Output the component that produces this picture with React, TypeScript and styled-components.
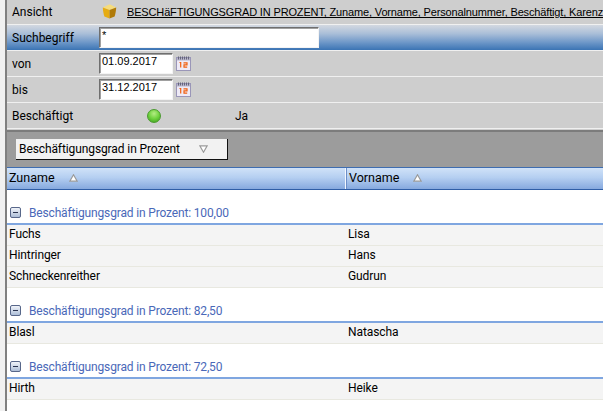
import React from "react";
import styled, { createGlobalStyle } from "styled-components";

const Global = createGlobalStyle`
  html, body { margin: 0; padding: 0; background: #fff; overflow: hidden; }
  body { font-family: Roboto, "Liberation Sans", sans-serif; font-size: 12px; color: #000; }
`;

const Shell = styled.div`
  width: 603px;
  height: 411px;
  display: flex;
  overflow: hidden;
`;

const Gutter = styled.div`
  width: 5px;
  flex: none;
  background: #f1f1f1;
  border-right: 2px solid #808080;
`;

const Main = styled.div`
  flex: 1;
  min-width: 0;
  display: flex;
  flex-direction: column;
`;

const FormRow = styled.div<{ $h: number }>`
  height: ${(p) => p.$h}px;
  box-sizing: border-box;
  flex: none;
  display: flex;
  align-items: center;
  background: #cecece;
  border-bottom: 1px solid #f0f0f0;
  white-space: nowrap;
  overflow: hidden;
`;

const SearchRow = styled(FormRow)`
  background: linear-gradient(#d3d8e0 0%, #a9bed8 35%, #6d97c8 70%, #3b74b4 100%);
`;

const Label = styled.div`
  width: 88px;
  padding-left: 5px;
  flex: none;
  font-size: 12px;
`;

const ViewIcon = styled.svg`
  width: 15px;
  height: 15px;
  flex: none;
  margin: 0 10px 2px 2px;
`;

const ViewLink = styled.span`
  font-family: "Liberation Sans", sans-serif;
  font-size: 11px;
  letter-spacing: -0.15px;
  text-decoration: underline;
`;

const TextField = styled.div<{ $w: number }>`
  width: ${(p) => p.$w}px;
  height: 21px;
  box-sizing: border-box;
  background: #fff;
  border-style: solid;
  border-width: 1px;
  border-color: #6f6f6f #f4f4f4 #f4f4f4 #6f6f6f;
  box-shadow: inset 1px 1px 0 #a0a0a0;
  font-family: "Liberation Sans", sans-serif;
  font-size: 11px;
  line-height: 15px;
  padding-left: 2px;
  margin-left: -1px;
`;

const CalIcon = styled.svg`
  width: 15px;
  height: 15px;
  flex: none;
  margin-left: 3px;
`;

const Led = styled.div`
  width: 14px;
  height: 14px;
  flex: none;
  border-radius: 50%;
  background: radial-gradient(circle at 50% 30%, #b4ec84 0%, #6fd23e 50%, #3a9a1c 100%);
  border: 0.5px solid #4a9a2e;
  box-sizing: border-box;
  margin-left: 47px;
`;

const Value = styled.span`
  margin-left: 74px;
  font-size: 12px;
`;

const GroupBar = styled.div`
  height: 37px;
  flex: none;
  margin-top: 1px;
  box-sizing: border-box;
  background: #9c9c9c;
  border-top: 2px solid #7c7c7c;
  box-shadow: 0 -1px 0 #cecece;
  padding: 7px 0 0 9px;
`;

const GroupChip = styled.div`
  width: 212px;
  height: 21px;
  box-sizing: border-box;
  background: #f2f2f2;
  border-right: 1px solid #111;
  border-bottom: 1px solid #111;
  display: flex;
  align-items: center;
  padding: 0 0 0 3px;
  font-size: 12px;
  letter-spacing: -0.1px;
`;

const SortGlyph = styled.svg`
  width: 9px;
  height: 8px;
  flex: none;
`;

const ChipSort = styled(SortGlyph)`
  margin-left: 19px;
`;

const GridHeader = styled.div`
  height: 23px;
  flex: none;
  box-sizing: border-box;
  display: flex;
  align-items: stretch;
  background: linear-gradient(#d0e2f8 0%, #b5cff1 45%, #86a9de 100%);
  border-top: 1px solid #3f6db0;
  border-bottom: 1px solid #2f5ea6;
`;

const HeadCell = styled.div<{ $w: number }>`
  width: ${(p) => p.$w}px;
  flex: none;
  box-sizing: border-box;
  display: flex;
  align-items: center;
  padding: 0 0 2px 2px;
  font-size: 12.5px;
  & + & { box-shadow: inset 1px 0 0 #f4f8ff, inset 2px 0 0 #6c8fc8; padding-left: 4px; }
`;

const HeadSort = styled(SortGlyph)`
  margin-left: 14px;
`;

const GroupHeader = styled.div`
  height: 35px;
  flex: none;
  box-sizing: border-box;
  display: flex;
  align-items: flex-end;
  padding: 0 0 3px 3px;
  background: #fff;
  border-bottom: 2px solid #7fa6e0;
  color: #4a68b8;
  font-size: 12px;
  letter-spacing: -0.16px;
`;

const Toggle = styled.svg`
  width: 11px;
  height: 11px;
  flex: none;
  margin: 0 8px 2px 0;
`;

const Row = styled.div`
  height: 21px;
  flex: none;
  box-sizing: border-box;
  display: flex;
  align-items: center;
  padding-bottom: 2px;
  background: #f4f4f4;
  border-bottom: 1px solid #e8e8e0;
  font-size: 12px;
  letter-spacing: -0.1px;
`;

const NameCell = styled.div`
  width: 341px;
  flex: none;
  padding-left: 2px;
  box-sizing: border-box;
`;

const Cube = () => (
  <ViewIcon viewBox="0 0 15 15">
    <path d="M.8 3.4 7 .6c.4-.1.8-.1 1.100 0l6.100 2.800L7.500 6Z" fill="#f6dc7c" />
    <path d="M.8 3.400 7.500 6v8.600L2.400 12.500C1.500 10 1 6.500.8 3.400Z" fill="#e6ac12" />
    <path d="M14.200 3.400 7.500 6v8.600l5.100-2.100c.9-2.500 1.400-6 1.600-9.100Z" fill="#b07a08" />
  </ViewIcon>
);

const Calendar = () => (
  <CalIcon viewBox="0 0 15 15">
    <rect x=".5" y="1.500" width="14" height="13" fill="#eeeaf6" stroke="#9a96b8" />
    <rect x="1" y="2" width="13" height="2.500" fill="#b8b6cc" />
    <path d="M2.500 .5v3M4.500 .5v3M6.500 .5v3M8.500 .5v3M10.500 .5v3M12.500 .5v3" stroke="#66667a" strokeWidth="1" />
    <path d="M3.500 6.500h1.200v5M7.500 6.800h3.500v2H8v2.400h3.200" fill="none" stroke="#f2600f" strokeWidth="1.200" />
  </CalIcon>
);

const Triangle = ({ down, as: C }: { down?: boolean; as: typeof ChipSort }) => (
  <C viewBox="0 0 9 8">
    <path
      d={down ? "M.8.8h7.400L4.500 7.200Z" : "M.8 7.200h7.400L4.500.8Z"}
      fill="#fff"
      stroke="#9a9a9a"
      strokeWidth="1.200"
    />
  </C>
);

const Minus = () => (
  <Toggle viewBox="0 0 11 11">
    <defs>
      <linearGradient id="tg" x1="0" y1="0" x2="0" y2="1">
        <stop offset="0" stopColor="#f4f6fa" />
        <stop offset="1" stopColor="#a9bbd6" />
      </linearGradient>
    </defs>
    <rect x=".5" y=".5" width="10" height="10" rx="1.500" fill="url(#tg)" stroke="#58678a" />
    <path d="M3 5.500h5" stroke="#2a3450" strokeWidth="1" />
  </Toggle>
);

const groups = [
  { title: "Beschäftigungsgrad in Prozent: 100,00", rows: [["Fuchs", "Lisa"], ["Hintringer", "Hans"], ["Schneckenreither", "Gudrun"]] },
  { title: "Beschäftigungsgrad in Prozent: 82,50", rows: [["Blasl", "Natascha"]] },
  { title: "Beschäftigungsgrad in Prozent: 72,50", rows: [["Hirth", "Heike"]] },
];

export default function App() {
  return (
    <Shell>
      <Global />
      <Gutter />
      <Main>
        <FormRow $h={25}>
          <Label>Ansicht</Label>
          <Cube />
          <ViewLink>BESCHäFTIGUNGSGRAD IN PROZENT, Zuname, Vorname, Personalnummer, Beschäftigt, Karenziert</ViewLink>
        </FormRow>
        <SearchRow $h={26}>
          <Label>Suchbegriff</Label>
          <TextField $w={220}>*</TextField>
        </SearchRow>
        <FormRow $h={26}>
          <Label>von</Label>
          <TextField $w={74}>01.09.2017</TextField>
          <Calendar />
        </FormRow>
        <FormRow $h={26}>
          <Label>bis</Label>
          <TextField $w={74}>31.12.2017</TextField>
          <Calendar />
        </FormRow>
        <FormRow $h={26}>
          <Label>Beschäftigt</Label>
          <Led />
          <Value>Ja</Value>
        </FormRow>
        <GroupBar>
          <GroupChip>
            Beschäftigungsgrad in Prozent
            <Triangle down as={ChipSort} />
          </GroupChip>
        </GroupBar>
        <GridHeader>
          <HeadCell $w={338}>
            Zuname
            <Triangle as={HeadSort} />
          </HeadCell>
          <HeadCell $w={258}>
            Vorname
            <Triangle as={HeadSort} />
          </HeadCell>
        </GridHeader>
        {groups.map((g) => (
          <React.Fragment key={g.title}>
            <GroupHeader>
              <Minus />
              {g.title}
            </GroupHeader>
            {g.rows.map(([a, b]) => (
              <Row key={a}>
                <NameCell>{a}</NameCell>
                <span>{b}</span>
              </Row>
            ))}
          </React.Fragment>
        ))}
      </Main>
    </Shell>
  );
}
